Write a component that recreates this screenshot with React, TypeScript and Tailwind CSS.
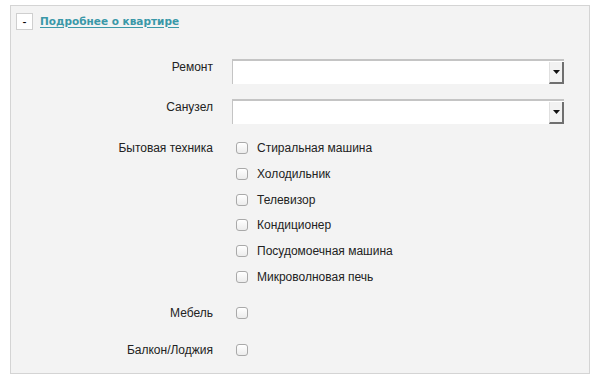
import { FC } from 'react'

const APPLIANCES = [
  'Стиральная машина',
  'Холодильник',
  'Телевизор',
  'Кондиционер',
  'Посудомоечная машина',
  'Микроволновая печь',
]

const Check: FC = () => (
  <span className="block w-[12px] h-[12px] rounded-[3px] border border-[#a9a9a9] bg-gradient-to-b from-white to-[#ececec] shadow-[inset_0_1px_0_#fff]" />
)

const Select: FC = () => (
  <div className="flex w-[332px] h-[25px] bg-white border-t-2 border-l border-[#c4c4c4]">
    <div className="flex-1" />
    <div className="w-[15px] mt-[1px] flex items-center justify-center bg-[#f2f2f2] border-l border-[#e0e0e0] border-r-2 border-b-2 border-r-[#6f6f6f] border-b-[#6f6f6f]">
      <svg width="7" height="4" viewBox="0 0 7 4">
        <path d="M0 0h7L3.5 4z" fill="#111" />
      </svg>
    </div>
  </div>
)

const App: FC = () => {
  return (
    <div className="w-[600px] h-[380px] bg-white pt-[5px] pl-[10px] font-['Liberation_Sans',Arial,sans-serif] text-[12px] text-[#222]">
      <div className="w-[580px] h-[369px] border border-[#d4d4d4] bg-[#f3f3f3]">
        {/* header */}
        <div className="flex items-center gap-[7px] pl-[5px] pt-[7px]">
          <button className="w-[17px] h-[17px] bg-white border border-[#cfcfcf] flex items-center justify-center text-[12px] leading-none text-black">
            -
          </button>
          <a
            href="#"
            className="font-['DejaVu_Sans',Verdana,sans-serif] font-bold text-[10.5px] text-[#3a98a8] underline underline-offset-2"
          >
            Подробнее о квартире
          </a>
        </div>

        <div className="grid grid-cols-[202px_1fr] gap-x-[19px] mt-[29px] leading-[16px]">
          <div className="text-right">Ремонт</div>
          <Select />

          <div className="text-right mt-[15px]">Санузел</div>
          <div className="mt-[15px]">
            <Select />
          </div>

          <div className="text-right mt-[16px]">Бытовая техника</div>
          <div className="mt-[16px] flex flex-col gap-[9.8px]">
            {APPLIANCES.map((name) => (
              <label key={name} className="flex items-center h-[16px]">
                <span className="ml-[4px] mr-[9px]">
                  <Check />
                </span>
                {name}
              </label>
            ))}
          </div>

          <div className="text-right mt-[20px]">Мебель</div>
          <div className="mt-[20px] h-[16px] flex items-center pl-[4px]">
            <Check />
          </div>

          <div className="text-right mt-[21px]">Балкон/Лоджия</div>
          <div className="mt-[21px] h-[16px] flex items-center pl-[4px]">
            <Check />
          </div>
        </div>
      </div>
    </div>
  )
}

export default App
